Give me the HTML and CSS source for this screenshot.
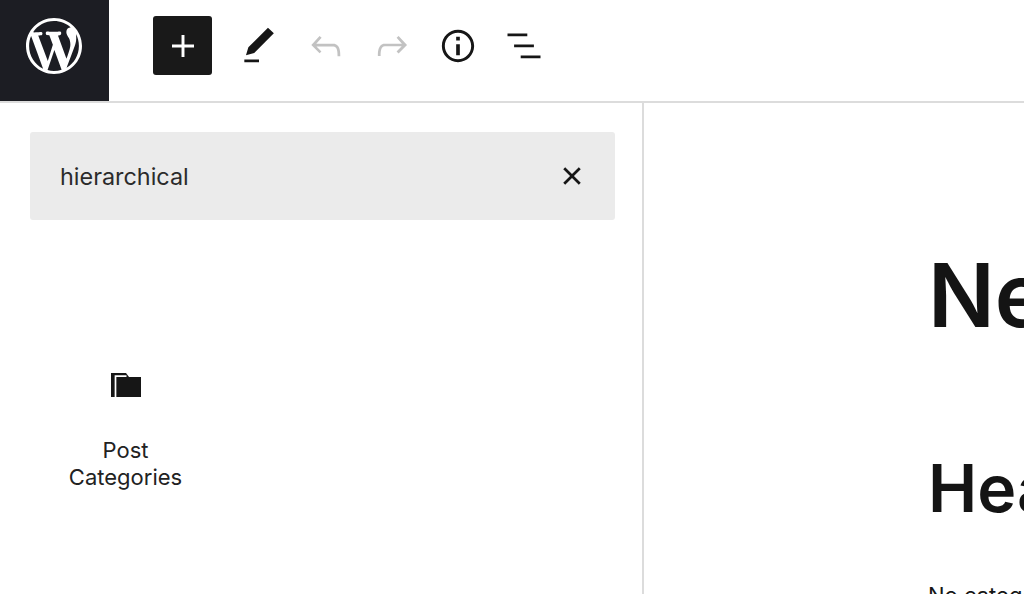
FILE: index.html
```html
<!DOCTYPE html>
<html lang="en">
<head>
  <meta charset="UTF-8" />
  <title>Edit Post</title>
  <link rel="stylesheet" href="styles.css">
</head>
<body>
  <header class="topbar">
    <a class="logo" href="#">
      <svg class="logo-icon" viewBox="0 0 20 20"><path d="M20 10c0-5.51-4.49-10-10-10C4.48 0 0 4.49 0 10c0 5.52 4.48 10 10 10 5.51 0 10-4.48 10-10zM7.78 15.37L4.37 6.22c.55-.02 1.17-.08 1.17-.08.5-.06.44-1.13-.06-1.11 0 0-1.45.11-2.37.11-.18 0-.37 0-.58-.01C4.12 2.69 6.87 1.11 10 1.11c2.33 0 4.45.87 6.05 2.34-.68-.11-1.65.39-1.65 1.58 0 .74.45 1.36.9 2.1.35.61.55 1.36.55 2.46 0 1.49-1.4 5-1.4 5l-3.03-8.37c.54-.02.82-.17.82-.17.5-.05.44-1.25-.06-1.22 0 0-1.44.12-2.38.12-.87 0-2.33-.12-2.33-.12-.5-.03-.56 1.2-.06 1.22l.92.08 1.26 3.41zM17.41 10c.24-.64.74-1.87.43-4.25.7 1.29 1.05 2.71 1.05 4.25 0 3.29-1.73 6.24-4.4 7.78.97-2.59 1.94-5.2 2.92-7.78zM6.1 18.09C3.12 16.65 1.11 13.53 1.11 10c0-1.3.23-2.48.72-3.59C3.25 10.3 4.67 14.2 6.1 18.09zm4.03-6.63l2.58 6.98c-.86.29-1.76.45-2.71.45-.79 0-1.57-.11-2.29-.33.81-2.38 1.62-4.74 2.42-7.1z"/></svg>
    </a>
    <div class="tools">
      <button class="tool add-btn">
        <svg class="icon" viewBox="0 0 24 24"><path d="M18 11.2h-5.2V6h-1.6v5.2H6v1.6h5.2V18h1.6v-5.2H18z"/></svg>
      </button>
      <button class="tool">
        <svg class="icon" viewBox="0 0 24 24"><path d="M20.1 5.1L16.9 2 6.2 12.7l-1.3 4.4 4.5-1.3L20.1 5.1zM4 20.8h8v-1.5H4v1.5z"/></svg>
      </button>
      <button class="tool disabled">
        <svg class="icon" viewBox="0 0 24 24"><path d="M18.3 11.7c-.6-.6-1.4-.9-2.3-.9H6.7l2.9-3.3-1.1-1-4.5 5L8.5 16l1-1-2.7-2.7H16c.5 0 .9.2 1.3.5 1 1 1 3.4 1 4.5v.3h1.5v-.2c0-1.5 0-4.3-1.5-5.7z"/></svg>
      </button>
      <button class="tool disabled">
        <svg class="icon" viewBox="0 0 24 24"><path d="M15.6 6.5l-1.1 1 2.9 3.3H8c-.9 0-1.7.3-2.3.9-1.4 1.5-1.4 4.2-1.4 5.6v.2h1.5v-.3c0-1.1 0-3.5 1-4.5.3-.3.7-.5 1.3-.5h9.2L14.5 15l1.1 1.1 4.6-4.6-4.6-5z"/></svg>
      </button>
      <button class="tool">
        <svg class="icon" viewBox="0 0 24 24"><path d="M12 3.2c-4.8 0-8.8 3.9-8.8 8.8 0 4.8 3.9 8.8 8.8 8.8 4.8 0 8.8-3.9 8.8-8.8 0-4.8-4-8.8-8.8-8.8zm0 16c-4 0-7.2-3.3-7.2-7.2C4.8 8 8 4.8 12 4.8s7.2 3.3 7.2 7.2c0 4-3.2 7.2-7.2 7.2zM11 17h2v-6h-2v6zm0-8h2V7h-2v2z"/></svg>
      </button>
      <button class="tool">
        <svg class="icon" viewBox="0 0 24 24"><path d="M13.8 5.2H3v1.5h10.8V5.2zm-3.6 12v1.5H21v-1.5H10.2zm7.2-6H6.6v1.5h10.8v-1.5z"/></svg>
      </button>
    </div>
  </header>

  <main class="layout">
    <aside class="inserter">
      <div class="search-box">
        <span class="search-text">hierarchical</span>
        <svg class="icon" viewBox="0 0 24 24"><path d="M12 13.06l3.712 3.713 1.061-1.06L13.061 12l3.712-3.712-1.06-1.06L12 10.938 8.288 7.227l-1.061 1.06L10.939 12l-3.712 3.712 1.06 1.061L12 13.061z"/></svg>
      </div>
      <div class="block-item">
        <svg class="block-icon" viewBox="0 0 30 24"><path d="M0 0H15L18 4H30V24H0Z"/><path class="folder-line" d="M4.5 24V3.2H15.5"/></svg>
        <span class="block-label">Post Categories</span>
      </div>
    </aside>

    <section class="canvas">
      <h1 class="post-title">New</h1>
      <h2 class="post-heading">Heading</h2>
      <p class="post-text">No categories</p>
    </section>
  </main>
</body>
</html>
```

FILE: styles.css
```css
* {
  box-sizing: border-box;
}

html, body {
  height: 100%;
  overflow: hidden;
}

body {
  margin: 0;
  font-family: 'Inter', sans-serif;
  color: #161616;
  background: white;
}

.topbar {
  display: flex;
  height: 103px;
  border-bottom: 2px solid #dcdcdc;
}

.logo {
  display: flex;
  align-items: center;
  justify-content: center;
  width: 109px;
  padding-right: 1px;
  padding-bottom: 9px;
  background-color: #1c1d23;
}

.logo-icon {
  width: 56px;
  height: 56px;
  fill: white;
}

.tools {
  display: flex;
  align-items: center;
  gap: 7.2px;
  padding-left: 44px;
  padding-bottom: 10px;
}

.tool {
  display: flex;
  align-items: center;
  justify-content: center;
  width: 59px;
  height: 59px;
  padding: 0;
  background: none;
  border: none;
}

.icon {
  width: 44px;
  height: 44px;
  flex: none;
  fill: #161616;
}

.add-btn {
  margin-right: 10.8px;
  background-color: #191919;
  border-radius: 3px;
}

.add-btn .icon {
  fill: white;
}

.disabled .icon {
  fill: #c2c2c2;
}

.layout {
  display: flex;
  height: 491px;
}

.inserter {
  width: 644px;
  flex: none;
  padding: 29px 27px 0 30px;
  border-right: 2px solid #dcdcdc;
}

.search-box {
  display: flex;
  align-items: center;
  justify-content: space-between;
  height: 88px;
  padding: 0 21px 0 30px;
  background-color: #ebebeb;
  border-radius: 3px;
}

.search-text {
  font-size: 23.4px;
  color: #2b2b2b;
}

.block-item {
  display: flex;
  flex-direction: column;
  align-items: center;
  width: 191px;
  margin-top: 153px;
}

.block-icon {
  width: 30px;
  height: 24px;
  fill: #161616;
}

.folder-line {
  fill: none;
  stroke: white;
  stroke-width: 1.7;
}

.block-label {
  width: 130px;
  margin-top: 40px;
  font-size: 22px;
  line-height: 27px;
  text-align: center;
  color: #222;
}

.canvas {
  flex: 1;
  min-width: 0;
  overflow: hidden;
  padding-left: 284px;
  white-space: nowrap;
}

.post-title {
  margin: 137px 0 0;
  font-size: 88px;
  line-height: 110px;
  font-weight: 600;
  color: #141414;
}

.post-heading {
  margin: 98px 0 0;
  font-size: 66px;
  line-height: 80px;
  font-weight: 600;
  color: #141414;
}

.post-text {
  margin: 52px 0 0;
  font-size: 22px;
  line-height: 30px;
}
```
